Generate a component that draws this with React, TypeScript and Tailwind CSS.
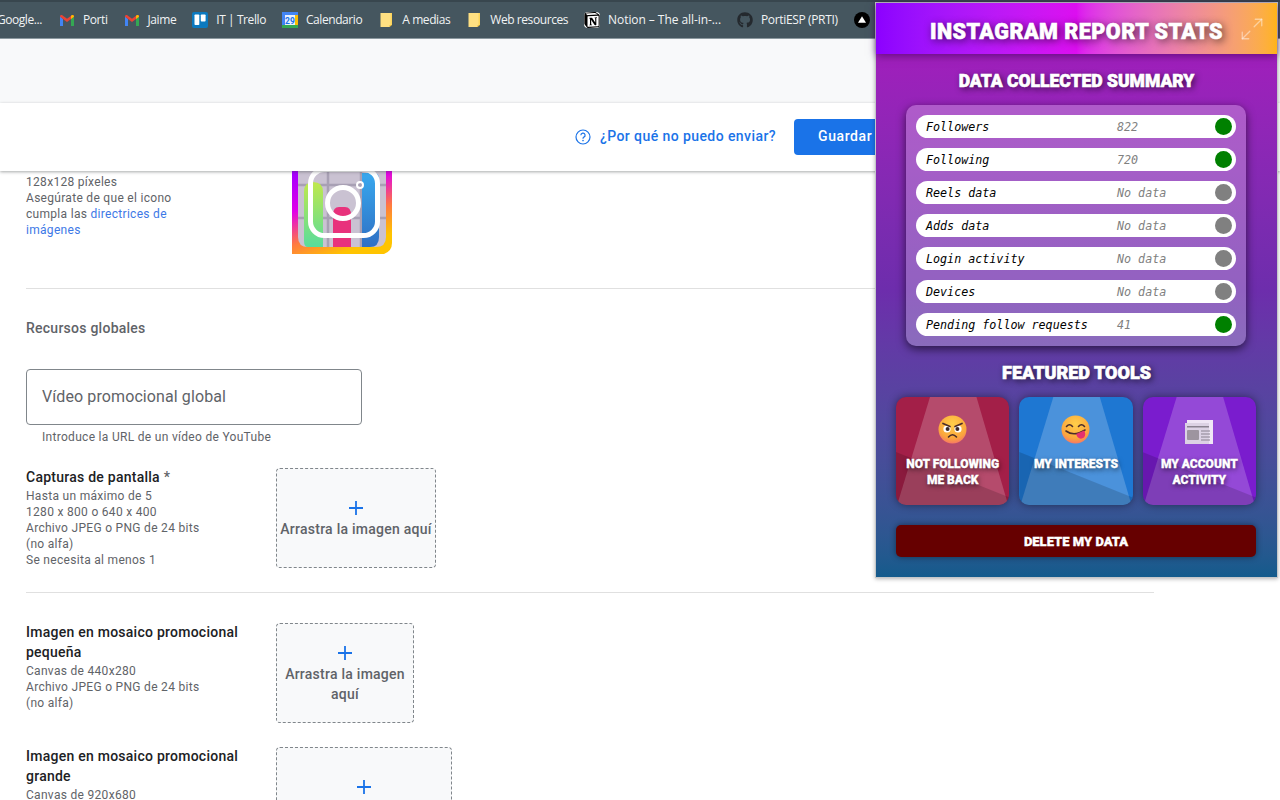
import React from 'react';
import { Maximize2 } from 'lucide-react';
import { FaGithub } from 'react-icons/fa';
import { SiNotion } from 'react-icons/si';

const Gmail = () => (
  <svg width="14" height="11" viewBox="0 0 14 11">
    <path d="M0 1.5 L0 11 L3 11 L3 4 Z" fill="#4285f4" />
    <path d="M14 1.5 L14 11 L11 11 L11 4 Z" fill="#34a853" />
    <path d="M0 1.5 C0 0 1.5 -0.4 2.6 0.4 L7 3.8 L7 7 L0 1.8 Z" fill="#ea4335" />
    <path d="M14 1.5 C14 0 12.5 -0.4 11.4 0.4 L7 3.8 L7 7 L11 4 L14 1.8 Z" fill="#ea4335" />
    <path d="M11 4 L14 1.8 C14 0 12.5 -0.4 11.4 0.4 L11 1 Z" fill="#fbbc04" />
  </svg>
);

const Trello = () => (
  <svg width="16" height="16" viewBox="0 0 16 16">
    <rect width="16" height="16" rx="2" fill="#0c79bf" />
    <rect x="2.5" y="2.5" width="4.8" height="10.5" rx="0.8" fill="#fff" />
    <rect x="8.8" y="2.5" width="4.8" height="7" rx="0.8" fill="#fff" />
  </svg>
);

const Calendar = () => (
  <svg width="16" height="16" viewBox="0 0 16 16">
    <rect width="16" height="16" rx="1" fill="#fff" />
    <path d="M0 0 H16 V3 H0 Z" fill="#4285f4" />
    <path d="M0 3 H3 V13 H0 Z" fill="#4285f4" />
    <path d="M13 3 H16 V13 H13 Z" fill="#fbbc04" />
    <path d="M0 13 H16 V16 H0 Z" fill="#34a853" />
    <rect x="3" y="3" width="10" height="10" fill="#e8f0fe" />
    <text x="8" y="11.5" textAnchor="middle" fontSize="8.5" fontWeight="700" fontFamily="Roboto, sans-serif" fill="#1a73e8">29</text>
  </svg>
);

const Note = () => (
  <svg width="12" height="14" viewBox="0 0 12 14">
    <path d="M0.5 0 H11 V12 L9.5 14 H0.5 Z" fill="#ffe082" />
    <path d="M9.5 12 H12 L9.5 14 Z" fill="#f2c23c" />
    <path d="M10.5 0 H12 V12 H10.5 Z" fill="#fbd45b" />
  </svg>
);

const Vercel = () => (
  <svg width="16" height="16" viewBox="0 0 16 16">
    <circle cx="8" cy="8" r="8" fill="#000" />
    <path d="M8 4.2 L12 10.8 H4 Z" fill="#fff" />
  </svg>
);

const Bookmark = ({ icon, label, tracking = 'tracking-[-0.42px]' }: { icon: React.ReactNode; label?: string; tracking?: string }) => (
  <div className="flex items-center gap-2 px-2 shrink-0">
    <span className="flex w-4 justify-center">{icon}</span>
    {label && <span className={`${tracking} text-[12px] text-[#f1f3f4] font-['Open_Sans',sans-serif] whitespace-nowrap`}>{label}</span>}
  </div>
);

const Plus = () => (
  <svg width="14" height="14" viewBox="0 0 14 14">
    <path d="M7 0 V14 M0 7 H14" stroke="#1a73e8" strokeWidth="1.8" />
  </svg>
);

const DropZone = ({ className }: { className: string }) => (
  <div className={`${className} h-[100px] shrink-0 flex flex-col items-center justify-center pt-[4px] border border-dashed border-[#80868b] rounded bg-[#f8f9fa] text-center`}>
    <Plus />
    <p className="mt-[4px] text-[14px] leading-[20px] tracking-[0.25px] font-medium text-[#5f6368] px-[3px]">Arrastra la imagen aquí</p>
  </div>
);

const ListingIcon = () => (
  <svg width="100" height="83" viewBox="0 0 100 83" className="block blur-[0.4px]">
    <defs>
      <linearGradient id="edge" x1="0" y1="0" x2="0.5" y2="1">
        <stop offset="0" stopColor="#a000ff" />
        <stop offset="0.4" stopColor="#e000e8" />
        <stop offset="0.72" stopColor="#ff7a40" />
        <stop offset="1" stopColor="#ffc400" />
      </linearGradient>
      <linearGradient id="lime" x1="0" y1="0" x2="0" y2="1">
        <stop offset="0" stopColor="#c0e84c" />
        <stop offset="1" stopColor="#58dc9c" />
      </linearGradient>
      <linearGradient id="sky" x1="0" y1="0" x2="0" y2="1">
        <stop offset="0" stopColor="#38a8ee" />
        <stop offset="1" stopColor="#2f70c4" />
      </linearGradient>
    </defs>
    <rect width="100" height="83" fill="url(#edge)" />
    <path d="M92 83 Q100 80 100 72 V83 Z" fill="#fff" />
    <path d="M6 0 H94 V66 Q94 76 84 76 H16 Q6 76 6 66 Z" fill="#cac2d2" />
    <path d="M6 14 H94 M6 47 H94 M36 0 V76 M69 0 V76" stroke="#a8a0b4" strokeWidth="2.5" />
    <path d="M12 21 Q12 11 21 11 Q31 11 31 21 V76 H16 Q12 76 12 70 Z" fill="url(#lime)" />
    <path d="M41 44 Q41 36 47 36 H53 Q59 36 59 44 V76 H41 Z" fill="#e8327c" />
    <path d="M70 2 H82 Q87 2 87 8 V66 Q87 76 78 76 H70 Z" fill="url(#sky)" />
    <rect x="18.5" y="-1.5" width="67" height="66" rx="14" fill="none" stroke="#fff" strokeWidth="5" />
    <circle cx="51" cy="32" r="15.5" fill="none" stroke="#fff" strokeWidth="5" />
    <circle cx="68" cy="14" r="3" fill="none" stroke="#fff" strokeWidth="2" />
  </svg>
);

const Face = ({ mood }: { mood: 'angry' | 'yum' }) => (
  <svg width="29" height="29" viewBox="0 0 29 29">
    <defs>
      <radialGradient id={`face-${mood}`} cx="0.5" cy="0.3" r="0.8">
        <stop offset="0" stopColor="#ffcf4a" />
        <stop offset="0.65" stopColor="#fba63c" />
        <stop offset="1" stopColor="#f4607a" />
      </radialGradient>
    </defs>
    <circle cx="14.5" cy="14.5" r="14" fill={`url(#face-${mood})`} />
    {mood === 'angry' ? (
      <g>
        <circle cx="9" cy="14" r="3.6" fill="#fff" />
        <circle cx="20" cy="14" r="3.6" fill="#fff" />
        <circle cx="9.6" cy="14" r="2" fill="#3a2a2a" />
        <circle cx="19.4" cy="14" r="2" fill="#3a2a2a" />
        <path d="M5 8.5 L12 11.5 M24 8.5 L17 11.5" stroke="#4a2c2a" strokeWidth="1.7" strokeLinecap="round" fill="none" />
        <path d="M10.5 22 Q14.5 17.5 18.5 22" stroke="#4a2c2a" strokeWidth="1.6" strokeLinecap="round" fill="none" />
      </g>
    ) : (
      <g>
        <path d="M5.5 11.5 Q8.5 8 11.5 11.5 M17.5 11.5 Q20.5 8 23.5 11.5" stroke="#4a2c2a" strokeWidth="1.6" strokeLinecap="round" fill="none" />
        <path d="M5 16 Q13 22 24 15" stroke="#4a2c2a" strokeWidth="1.6" strokeLinecap="round" fill="none" />
        <path d="M15 19 L23 15.5 Q25.5 19 23 22.5 Q19.5 25 16.5 22 Z" fill="#e5306f" />
      </g>
    )}
  </svg>
);

const Newspaper = () => (
  <svg width="28" height="24" viewBox="0 0 28 24">
    <rect x="2" y="0" width="26" height="24" fill="#efe6f5" />
    <rect x="0" y="3" width="24" height="21" fill="#dcd2e4" />
    <rect x="2" y="6" width="22" height="1.5" fill="#8a8290" />
    <rect x="2" y="10" width="12" height="10" rx="1" fill="#9d949f" />
    <path d="M16 11 H25 M16 14 H25 M16 17 H25 M16 20 H25" stroke="#8a8290" strokeWidth="1" />
  </svg>
);

const ToolCard = ({ bg, icon, label }: { bg: string; icon: React.ReactNode; label: string[] }) => (
  <div className={`${bg} relative h-[108px] flex-1 overflow-hidden rounded-[10px] shadow-[0_0_8px_rgba(0,0,0,0.45)]`}>
    <div className="absolute inset-0 bg-white/20 [clip-path:polygon(30%_0,71%_0,99%_100%,1%_100%)]" />
    <div className="absolute inset-0 bg-black/15 [clip-path:polygon(0_51%,100%_93%,100%_100%,0_100%)]" />
    <div className="relative flex h-[47px] items-end justify-center">{icon}</div>
    <div className="relative mt-[12px] flex flex-col items-center text-[12px] leading-[16px] font-black text-white font-['Roboto',sans-serif] [-webkit-text-stroke:0.3px_#fff] [text-shadow:1px_2px_5px_rgba(0,0,0,0.6)]">
      {label.map((line) => <span key={line}>{line}</span>)}
    </div>
  </div>
);

const DataRow = ({ name, value, on }: { name: string; value: string; on?: boolean }) => (
  <div className="flex h-[23px] items-center rounded-full bg-white pl-[10px] pr-[4px] font-['DejaVu_Sans_Mono',monospace] text-[11.7px] italic">
    <span className="w-[191px] pt-[2px] text-black whitespace-nowrap">{name}</span>
    <span className="flex-1 pt-[2px] text-[#808080]">{value}</span>
    <span className={`${on ? 'bg-[#008000]' : 'bg-[#808080]'} h-[17px] w-[17px] rounded-full`} />
  </div>
);

const Popup = () => (
  <div className="absolute z-20 left-[875px] top-[2px] h-[576px] w-[403px] border border-[#c4c7c9] bg-gradient-to-b from-[#ab17bf] via-[#6d2dac] to-[#135b8c] shadow-[0_1px_4px_rgba(0,0,0,0.3)]">
    <div className="relative flex h-[51px] items-center justify-center pt-[8px] bg-gradient-to-r from-[#8c00ff] via-[#dc0ef0] via-50% to-[#ffb414] shadow-[0_2px_8px_rgba(60,0,90,0.6)]">
      <h1 className="text-[21.5px] font-black tracking-[0.5px] text-white font-['Roboto',sans-serif] [-webkit-text-stroke:0.6px_#fff] [text-shadow:2px_2px_8px_rgba(0,0,0,0.75)]">INSTAGRAM REPORT STATS</h1>
      <Maximize2 className="absolute right-[12px] top-[13px] h-[26px] w-[26px] text-white/45" strokeWidth={1.2} />
    </div>
    <h2 className="mt-[15px] text-center text-[17.5px] leading-[24px] font-black text-white font-['Roboto',sans-serif] [-webkit-text-stroke:0.6px_#fff] [text-shadow:2px_2px_6px_rgba(0,0,0,0.7)]">DATA COLLECTED SUMMARY</h2>
    <div className="ml-[30px] mr-[31px] mt-[12px] flex h-[241px] flex-col gap-[10px] rounded-[10px] bg-white/25 p-[10px] shadow-[0_3px_10px_rgba(0,0,0,0.6)]">
      <DataRow name="Followers" value="822" on />
      <DataRow name="Following" value="720" on />
      <DataRow name="Reels data" value="No data" />
      <DataRow name="Adds data" value="No data" />
      <DataRow name="Login activity" value="No data" />
      <DataRow name="Devices" value="No data" />
      <DataRow name="Pending follow requests" value="41" on />
    </div>
    <h2 className="mt-[15px] text-center text-[18px] leading-[24px] font-black text-white font-['Roboto',sans-serif] [-webkit-text-stroke:0.6px_#fff] [text-shadow:2px_2px_6px_rgba(0,0,0,0.7)]">FEATURED TOOLS</h2>
    <div className="ml-[20px] mr-[21px] mt-[12px] flex gap-[10px]">
      <ToolCard bg="bg-[#a31f48]" icon={<Face mood="angry" />} label={['NOT FOLLOWING', 'ME BACK']} />
      <ToolCard bg="bg-[#1e77d2]" icon={<Face mood="yum" />} label={['MY INTERESTS']} />
      <ToolCard bg="bg-[#7a1cce]" icon={<Newspaper />} label={['MY ACCOUNT', 'ACTIVITY']} />
    </div>
    <button className="ml-[20px] mt-[20px] flex h-[32px] w-[360px] items-center justify-center rounded-[5px] bg-[#660000] pt-[1px] text-[13px] font-black text-white font-['Roboto',sans-serif] [-webkit-text-stroke:0.3px_#fff] shadow-[0_0_6px_rgba(0,0,0,0.45)]">DELETE MY DATA</button>
  </div>
);

const Asset = ({ title, required, lines, children }: { title: string[]; required?: boolean; lines: string[]; children: React.ReactNode }) => (
  <div className="flex">
    <div className="-mt-[1px] w-[250px] shrink-0">
      {title.map((t) => (
        <p key={t} className="text-[14px] leading-[20px] tracking-[0.25px] font-medium text-[#202124]">
          {t}
          {required && <span className="text-[#5f6368]"> *</span>}
        </p>
      ))}
      <div className="mt-[1px]">
        {lines.map((l) => (
          <p key={l} className="text-[12px] leading-[16px] tracking-[0.3px] text-[#5f6368]">{l}</p>
        ))}
      </div>
    </div>
    {children}
  </div>
);

export default function App() {
  return (
    <div className="relative h-[800px] w-[1280px] overflow-hidden bg-white font-['Roboto',sans-serif]">
      {/* Browser bookmarks */}
      <div className="h-[39px] border-t-2 border-b-[1px] border-t-[#38464e] border-b-[#8b989f] bg-[#45565f] flex items-center -ml-[13px]">
        <div className="w-[55px] shrink-0 text-right text-[12px] text-[#f1f3f4] font-['Open_Sans',sans-serif] tracking-[-0.42px] whitespace-nowrap">Google...</div>
        <div className="flex items-center pl-[9px]">
          <Bookmark icon={<Gmail />} label="Porti" />
          <Bookmark icon={<Gmail />} label="Jaime" />
          <Bookmark icon={<Trello />} label="IT | Trello" />
          <Bookmark icon={<Calendar />} label="Calendario" />
          <Bookmark icon={<Note />} label="A medias" />
          <Bookmark icon={<Note />} label="Web resources" />
          <Bookmark icon={<SiNotion className="h-4 w-4 rounded-sm bg-white text-black" />} label="Notion – The all-in-..." tracking="tracking-[-0.07px]" />
          <Bookmark icon={<FaGithub className="h-4 w-4 text-[#24292e]" />} label="PortiESP (PRTI)" tracking="tracking-[-0.35px]" />
          <Bookmark icon={<Vercel />} />
        </div>
      </div>

      <div className="h-[64px] bg-[#f8f9fa]" />

      {/* Submit bar */}
      <div className="relative z-10 flex h-[68px] items-center justify-end pr-[390px] pb-[1px] bg-white shadow-[0_1px_3px_rgba(60,64,67,0.45)]">
        <svg width="16" height="16" viewBox="0 0 16 16" className="mr-[9px]" fill="none">
          <circle cx="8" cy="8" r="7" stroke="#1a73e8" strokeWidth="1.2" />
          <path d="M5.9 6.3 A2.1 2.1 0 1 1 8.9 8.1 Q8 8.6 8 9.7" stroke="#1a73e8" strokeWidth="1.2" />
          <circle cx="8" cy="11.6" r="0.8" fill="#1a73e8" />
        </svg>
        <span className="text-[14px] font-medium tracking-[0.42px] text-[#1a73e8]">¿Por qué no puedo enviar?</span>
        <button className="ml-[18px] h-[36px] w-[96px] rounded bg-[#1a73e8] pl-[24px] text-left text-[14px] font-medium tracking-[0.6px] text-white">Guardar</button>
      </div>

      {/* Store listing form */}
      <div className="w-[1154px] pl-[26px]">
        <div className="flex h-[118px] border-b border-[#e0e0e0]">
          <div className="w-[266px] pt-[3px] text-[12px] leading-[16px] tracking-[0.3px] text-[#5f6368]">
            <p>128x128 píxeles</p>
            <p className="w-[160px]">
              Asegúrate de que el icono cumpla las <span className="text-[#3d78e6]">directrices de imágenes</span>
            </p>
          </div>
          <ListingIcon />
        </div>

        <p className="mt-[29px] text-[14px] leading-[20px] tracking-[0.25px] font-medium text-[#5f6368]">Recursos globales</p>

        <div className="mt-[31px] flex h-[56px] w-[336px] items-center rounded border border-[#80868b] pl-[15px] text-[16px] tracking-[0.1px] text-[#5f6368]">
          Vídeo promocional global
        </div>
        <p className="mt-[4px] pl-[16px] text-[12px] leading-[16px] tracking-[0.3px] text-[#5f6368]">Introduce la URL de un vídeo de YouTube</p>

        <div className="mt-[23px] h-[125px] border-b border-[#e0e0e0]">
          <Asset
            title={['Capturas de pantalla']}
            required
            lines={['Hasta un máximo de 5', '1280 x 800 o 640 x 400', 'Archivo JPEG o PNG de 24 bits', '(no alfa)', 'Se necesita al menos 1']}
          >
            <DropZone className="w-[160px]" />
          </Asset>
        </div>

        <div className="mt-[30px] h-[124px]">
          <Asset
            title={['Imagen en mosaico promocional', 'pequeña']}
            lines={['Canvas de 440x280', 'Archivo JPEG o PNG de 24 bits', '(no alfa)']}
          >
            <DropZone className="w-[138px]" />
          </Asset>
        </div>

        <Asset title={['Imagen en mosaico promocional', 'grande']} lines={['Canvas de 920x680']}>
          <DropZone className="w-[176px]" />
        </Asset>
      </div>

      <Popup />
    </div>
  );
}
